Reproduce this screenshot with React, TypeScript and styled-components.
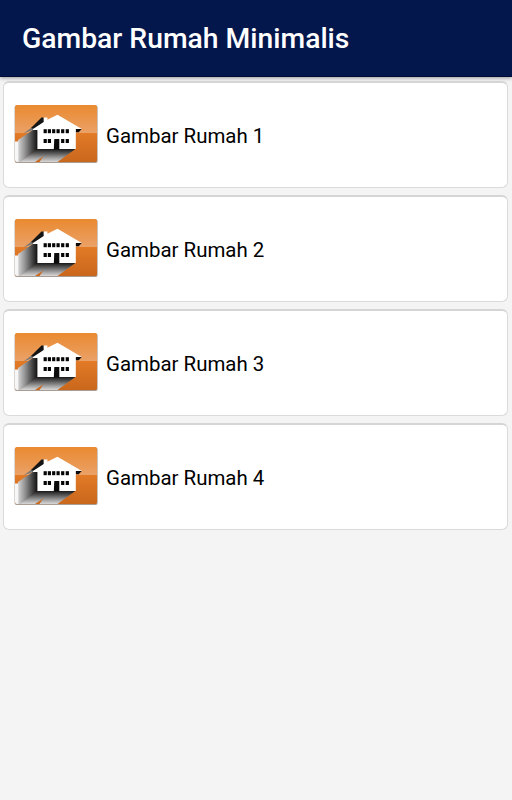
import React from "react";
import styled, { createGlobalStyle } from "styled-components";

const GlobalStyle = createGlobalStyle`
  * { box-sizing: border-box; }
  body { margin: 0; background: #f4f4f4; font-family: Roboto, sans-serif; }
`;

const Screen = styled.div`
  display: flex;
  flex-direction: column;
  height: 800px;
  background: #f4f4f4;
`;

const AppBar = styled.header`
  display: flex;
  align-items: center;
  flex: 0 0 77px;
  padding: 2px 0 0 22px;
  background: #04174c;
  border-bottom: 1px solid #020b38;
  box-shadow: 0 1px 4px rgba(0, 0, 0, 0.38);
`;

const Title = styled.h1`
  margin: 0;
  color: #fff;
  font-size: 28.3px;
  font-weight: 500;
  line-height: 34px;
  white-space: nowrap;
`;

const List = styled.main`
  display: flex;
  flex-direction: column;
  gap: 7px;
  padding: 4px 4px 0 3px;
`;

const Card = styled.article`
  display: flex;
  align-items: flex-start;
  height: 107px;
  padding: 21px 10px 0;
  background: #fff;
  border: 1px solid #dadada;
  border-top: 2px solid #d5d5d5;
  border-radius: 6px;
`;

const Thumbnail = styled.svg`
  flex: none;
  width: 84px;
  height: 60px;
`;

const Label = styled.span`
  margin: 19px 0 0 8px;
  color: #000;
  font-size: 20.45px;
  line-height: 26px;
  white-space: nowrap;
`;

const upperWindows = [29.6, 33.8, 38.1, 42.5, 47.1, 51.7];
const lowerWindows = [29.6, 33.8, 47.1, 51.7];

function HouseIcon({ id }: { id: number }) {
  const orange = `orange-${id}`;
  const side = `side-${id}`;
  const base = `base-${id}`;
  const gloss = `gloss-${id}`;
  const clip = `clip-${id}`;
  return (
    <Thumbnail viewBox="0 0 84 60" aria-hidden="true">
      <defs>
        <linearGradient id={orange} x1="0" y1="0" x2="0" y2="1">
          <stop offset="0" stopColor="#ea882c" />
          <stop offset=".5" stopColor="#e27a27" />
          <stop offset="1" stopColor="#c9671c" />
        </linearGradient>
        <linearGradient id={gloss} x1="0" y1="0" x2="0" y2="1">
          <stop offset="0" stopColor="#fff" stopOpacity=".02" />
          <stop offset="1" stopColor="#fff" stopOpacity=".3" />
        </linearGradient>
        <linearGradient id={side} gradientUnits="userSpaceOnUse" x1="23.5" y1="0" x2="4" y2="0">
          <stop offset="0" stopColor="#101010" />
          <stop offset=".3" stopColor="#4c4c4c" />
          <stop offset=".65" stopColor="#949494" />
          <stop offset="1" stopColor="#d4d4d4" />
        </linearGradient>
        <linearGradient id={base} gradientUnits="userSpaceOnUse" x1="0" y1="45" x2="0" y2="58">
          <stop offset="0" stopColor="#181818" />
          <stop offset=".35" stopColor="#5c5c5c" />
          <stop offset=".7" stopColor="#a2a2a2" />
          <stop offset="1" stopColor="#d8d8d8" />
        </linearGradient>
        <clipPath id={clip}>
          <rect x="1" y="1" width="82" height="57" rx="2" />
        </clipPath>
      </defs>
      <rect x=".6" y="1.5" width="83" height="57.5" rx="2" fill="#a89c93" />
      <g clipPath={`url(#${clip})`}>
        <rect x="1" y="1" width="82" height="57" fill={`url(#${orange})`} />
        <rect x="1" y="1" width="82" height="28" fill={`url(#${gloss})`} />
        <path d="M19 22.5L9.5 29.5L20 25.5Z" fill="#777" />
        <path d="M29.7 13.4H27.5L17 24L20 25L30 18.5Z" fill="#151515" />
        <path d="M20 25.2L4 36V58H7L24 45V25Z" fill={`url(#${side})`} />
        <path d="M24 44.8L6 58H21L40.5 44.8Z" fill={`url(#${base})`} />
        <path d="M40.5 44.8L31 50L25.5 58H43.5L61.7 44.8Z" fill={`url(#${base})`} />
        <path d="M24 44.8H42L30 52L22 56Z" fill={`url(#${base})`} />
        <path d="M1 37.5H4.3V58H1Z" fill="#f6f6f6" />
        <path d="M61.5 25H67.7L64.7 28.2H61.5Z" fill="#080808" />
        <path d="M19 25L29.7 18V13.4H33.4V15.8L43.5 10.8L67.8 25H61.8V45H23.4V26H19Z" fill="#fff" />
        {upperWindows.map((x) => (
          <rect key={x} x={x} y="25.2" width="3.2" height="4" fill="#050505" />
        ))}
        {lowerWindows.map((x) => (
          <rect key={x} x={x} y="35" width="3.2" height="4" fill="#050505" />
        ))}
        <path d="M40.3 35H45.3V45.5H39.8Z" fill="#0b0b0b" />
      </g>
    </Thumbnail>
  );
}

export default function App() {
  return (
    <Screen>
      <GlobalStyle />
      <AppBar>
        <Title>Gambar Rumah Minimalis</Title>
      </AppBar>
      <List>
        {[1, 2, 3, 4].map((n) => (
          <Card key={n}>
            <HouseIcon id={n} />
            <Label>Gambar Rumah {n}</Label>
          </Card>
        ))}
      </List>
    </Screen>
  );
}
